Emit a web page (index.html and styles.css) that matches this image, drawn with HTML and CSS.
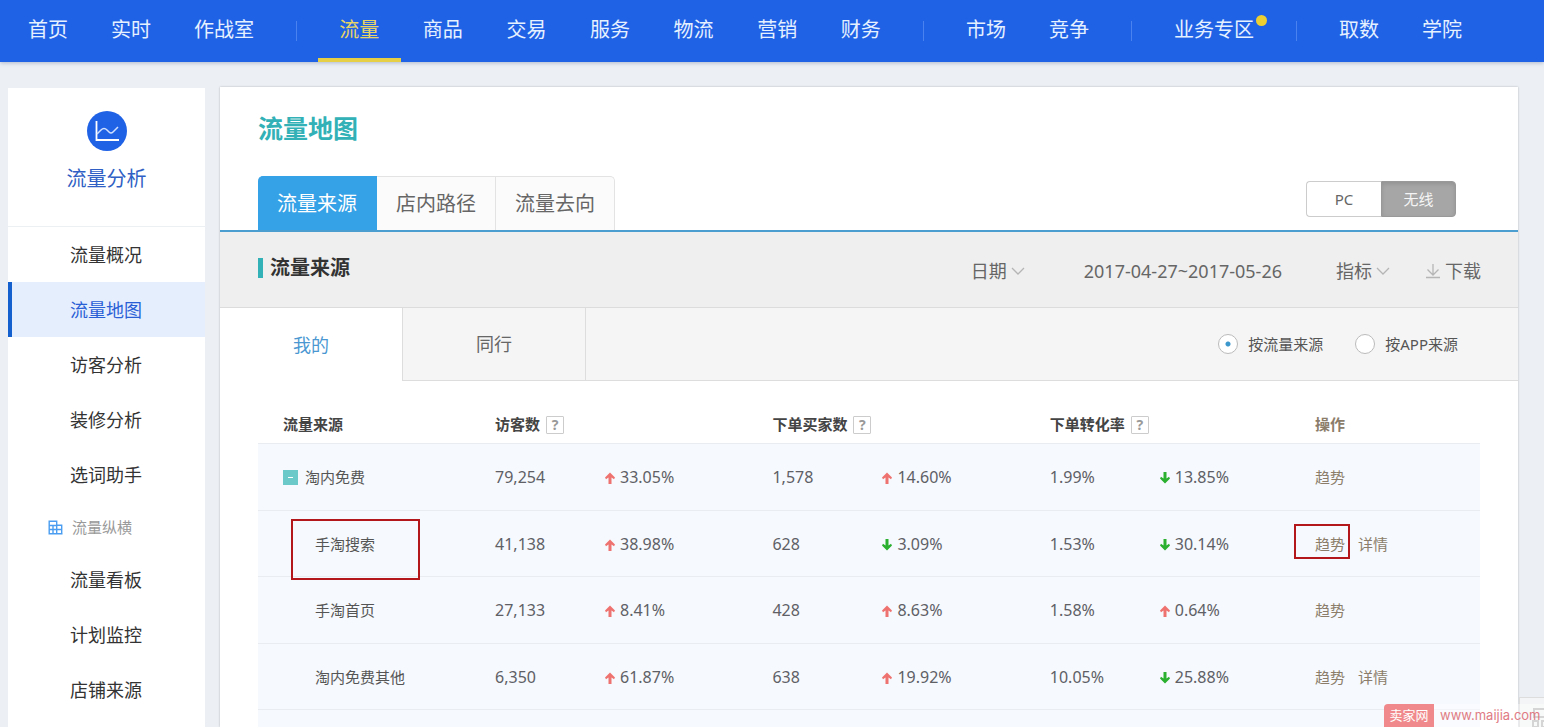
FILE: index.html
```html
<!DOCTYPE html>
<html lang="zh-CN">
<head>
<meta charset="utf-8">
<title>流量地图</title>
<link rel="stylesheet" href="styles.css">
</head>
<body>
<svg class="defs" aria-hidden="true">
  <symbol id="up" viewBox="0 0 10 12"><path d="M5 0.500 10 5.500 9 7.300 6.500 5.500V12h-3V5.500L1 7.300 0 5.500z"/></symbol>
  <symbol id="down" viewBox="0 0 10 12"><path d="M5 11.500 0 6.500 1 4.700 3.500 6.500V0h3v6.500L9 4.700l1 1.800z"/></symbol>
  <symbol id="chevron" viewBox="0 0 14 9"><path d="M1 1l6 6 6-6" fill="none" stroke="currentColor" stroke-width="1.300"/></symbol>
</svg>

<nav class="topbar">
  <div class="nav-group">
    <a href="#">首页</a><a href="#">实时</a><a href="#">作战室</a>
  </div>
  <span class="sep"></span>
  <div class="nav-group nav-wide">
    <a href="#" class="current">流量</a><a href="#">商品</a><a href="#">交易</a><a href="#">服务</a><a href="#">物流</a><a href="#">营销</a><a href="#">财务</a>
  </div>
  <span class="sep"></span>
  <div class="nav-group"><a href="#">市场</a><a href="#">竞争</a></div>
  <span class="sep"></span>
  <div class="nav-group"><a href="#"><span class="dotted">业务专区</span></a></div>
  <span class="sep"></span>
  <div class="nav-group"><a href="#">取数</a><a href="#">学院</a></div>
</nav>

<div class="layout">
  <aside class="sidebar">
    <div class="side-head">
      <svg width="40" height="40" viewBox="0 0 40 40" aria-hidden="true">
        <circle cx="20" cy="20" r="20" fill="#2062e6"/>
        <path d="M9.500 10v19H32" fill="none" stroke="#fff" stroke-width="1.800"/>
        <path d="M10 23l4-4q3-3 6 0l2 2q2 2 4 0l5-5" fill="none" stroke="#cfe0ff" stroke-width="1.500"/>
      </svg>
      <span>流量分析</span>
    </div>
    <a href="#">流量概况</a>
    <a href="#" class="current">流量地图</a>
    <a href="#">访客分析</a>
    <a href="#">装修分析</a>
    <a href="#">选词助手</a>
    <div class="side-group">
      <svg width="15" height="15" viewBox="0 0 15 15" fill="none" stroke="#4a9df0" stroke-width="1.400" aria-hidden="true">
        <path d="M1.200 13.800v-12.500h7.500v12.500M8.700 5.200h5v8.600M0.500 13.800h14M1.200 5.500h7.500M1.200 9.500h7.500M5 5v9M9 9.500h4.500"/>
      </svg>
      <span>流量纵横</span>
    </div>
    <a href="#">流量看板</a>
    <a href="#">计划监控</a>
    <a href="#">店铺来源</a>
  </aside>

  <main class="panel">
    <h1>流量地图</h1>
    <div class="tab-row">
      <div class="tabs">
        <button class="active">流量来源</button><button>店内路径</button><button>流量去向</button>
      </div>
      <div class="toggle">
        <button aria-pressed="false">PC</button><button aria-pressed="true">无线</button>
      </div>
    </div>

    <div class="section-head">
      <h2>流量来源</h2>
      <div class="tools">
        <button>日期<svg width="14" height="9"><use href="#chevron"/></svg></button>
        <span class="range">2017-04-27~2017-05-26</span>
        <button>指标<svg width="14" height="9"><use href="#chevron"/></svg></button>
        <button class="download"><svg width="16" height="16" viewBox="0 0 16 16" fill="none" stroke="currentColor" stroke-width="1.300"><path d="M8 1v10.500M2.500 6.500L8 12l5.500-5.500M1 14.500h14"/></svg>下载</button>
      </div>
    </div>

    <div class="scope">
      <button class="active">我的</button><button>同行</button>
      <div class="radios">
        <label><input type="radio" name="by" checked>按流量来源</label>
        <label><input type="radio" name="by">按APP来源</label>
      </div>
    </div>

    <div class="table-wrap">
      <table>
        <colgroup><col class="c-name"><col class="c-num"><col class="c-chg"><col class="c-num"><col class="c-chg"><col class="c-num"><col class="c-last"><col></colgroup>
        <thead>
          <tr>
            <th>流量来源</th>
            <th colspan="2">访客数<button class="help">?</button></th>
            <th colspan="2">下单买家数<button class="help">?</button></th>
            <th colspan="2">下单转化率<button class="help">?</button></th>
            <th class="ops">操作</th>
          </tr>
        </thead>
        <tbody>
          <tr>
            <td><button class="fold" aria-label="收起"></button>淘内免费</td>
            <td>79,254</td><td><svg class="up"><use href="#up"/></svg>33.05%</td>
            <td>1,578</td><td><svg class="up"><use href="#up"/></svg>14.60%</td>
            <td>1.99%</td><td><svg class="down"><use href="#down"/></svg>13.85%</td>
            <td class="ops"><a href="#">趋势</a></td>
          </tr>
          <tr class="sub">
            <td><span class="mark mark-name">手淘搜索</span></td>
            <td>41,138</td><td><svg class="up"><use href="#up"/></svg>38.98%</td>
            <td>628</td><td><svg class="down"><use href="#down"/></svg>3.09%</td>
            <td>1.53%</td><td><svg class="down"><use href="#down"/></svg>30.14%</td>
            <td class="ops"><a href="#" class="mark mark-link">趋势</a><a href="#">详情</a></td>
          </tr>
          <tr class="sub">
            <td>手淘首页</td>
            <td>27,133</td><td><svg class="up"><use href="#up"/></svg>8.41%</td>
            <td>428</td><td><svg class="up"><use href="#up"/></svg>8.63%</td>
            <td>1.58%</td><td><svg class="up"><use href="#up"/></svg>0.64%</td>
            <td class="ops"><a href="#">趋势</a></td>
          </tr>
          <tr class="sub">
            <td>淘内免费其他</td>
            <td>6,350</td><td><svg class="up"><use href="#up"/></svg>61.87%</td>
            <td>638</td><td><svg class="up"><use href="#up"/></svg>19.92%</td>
            <td>10.05%</td><td><svg class="down"><use href="#down"/></svg>25.88%</td>
            <td class="ops"><a href="#">趋势</a><a href="#">详情</a></td>
          </tr>
        </tbody>
      </table>
    </div>
  </main>
</div>

<div class="dock">
  <svg width="12" height="19" viewBox="0 0 12 19" fill="none" stroke="#b9b9b9" stroke-width="2" aria-hidden="true"><path d="M2 1h12v8H2zM1 13h5v6H1zM10 13h5v6h-5z"/></svg>
</div>
<div class="watermark"><b>卖家网</b><span>www.maijia.com</span></div>
</body>
</html>
```
FILE: styles.css
```css
* { box-sizing: border-box; }

body {
  margin: 0;
  height: 100vh;
  overflow: hidden;
  display: flex;
  flex-direction: column;
  background: #ecf0f5;
  color: #333;
  font-family: "Noto Sans", "Noto Sans CJK SC", sans-serif;
  font-size: 16px;
  line-height: 24px;
}

a { color: inherit; text-decoration: none; }
button {
  margin: 0;
  padding: 0;
  border: 0;
  background: none;
  color: inherit;
  font: inherit;
}
.defs { position: absolute; width: 0; height: 0; }

/* top navigation */
.topbar {
  flex: none;
  display: flex;
  align-items: center;
  height: 62px;
  padding-left: 7px;
  background: #2062e6;
  color: #e6f1ff;
  font-size: 20px;
  white-space: nowrap;
  box-shadow: 0 1px 4px rgba(60, 80, 130, .35);
  z-index: 1;
}
.nav-group { display: flex; }
.nav-group a {
  height: 62px;
  padding: 0 21px;
  line-height: 60px;
  text-align: center;
}
.nav-group a + a { margin-left: 1px; }
.nav-wide { flex: 0 0 584px; }
.nav-wide a { flex: 1; padding: 0; }
.nav-group .current { color: #e8d568; border-bottom: 4px solid #e6cf45; }
.sep { width: 1px; height: 20px; margin: 0 21px; background: #4a83f0; }
.dotted { position: relative; }
.dotted::after {
  content: "";
  position: absolute;
  top: -1px;
  right: -13px;
  width: 11px;
  height: 11px;
  border-radius: 50%;
  background: #edcf32;
}

.layout {
  flex: 1;
  min-height: 0;
  display: flex;
  gap: 15px;
  padding: 25px 26px 0 8px;
}

/* sidebar */
.sidebar {
  flex: 0 0 197px;
  margin-top: 1px;
  background: #fff;
  font-size: 18px;
}
.sidebar a {
  display: block;
  height: 55px;
  padding: 2px 0 0 62px;
  line-height: 53px;
}
.sidebar a.current {
  padding-left: 58px;
  border-left: 4px solid #1560cf;
  background: #e5eefd;
  color: #2a60d6;
}
.side-head {
  display: flex;
  flex-direction: column;
  align-items: center;
  gap: 16px;
  height: 139px;
  padding-top: 23px;
  border-bottom: 1px solid #edf0f2;
  color: #2f5fc4;
  font-size: 20px;
}
.side-group {
  display: flex;
  align-items: center;
  gap: 9px;
  height: 50px;
  padding-left: 40px;
  color: #999;
  font-size: 15px;
}

/* main panel */
.panel {
  flex: 1;
  display: flex;
  flex-direction: column;
  min-width: 0;
  background: #fff;
  box-shadow: 0 0 2px rgba(0, 0, 0, .25);
}
h1 {
  margin: 0;
  padding: 25px 38px 0;
  color: #32b1b6;
  font-size: 25px;
  line-height: 32px;
}
.tab-row {
  display: flex;
  justify-content: space-between;
  align-items: flex-end;
  margin-top: 32px;
  padding: 0 62px 0 38px;
  border-bottom: 2px solid #4a9fd0;
}
.tabs { display: flex; }
.tabs button {
  width: 119px;
  height: 54px;
  border: 1px solid #e3e3e3;
  border-width: 1px 1px 0 0;
  background: #fbfbfb;
  color: #666;
  font-size: 20px;
}
.tabs button:first-child { border-top-left-radius: 5px; }
.tabs button:last-child { border-top-right-radius: 5px; }
.tabs .active { border-color: #35a1e6; background: #35a1e6; color: #fff; }
.toggle { display: flex; margin-bottom: 13px; }
.toggle button {
  width: 75px;
  height: 36px;
  border: 1px solid #ccc;
  border-right: 0;
  border-radius: 4px 0 0 4px;
  color: #666;
  font-size: 15px;
}
.toggle [aria-pressed="true"] {
  border: 1px solid #999;
  border-radius: 0 4px 4px 0;
  background: #a6a6a6;
  color: #f5f5f5;
  box-shadow: inset 0 2px 4px rgba(0, 0, 0, .12);
}

.section-head {
  display: flex;
  justify-content: space-between;
  align-items: center;
  height: 76px;
  padding: 0 37px 0 38px;
  border-bottom: 1px solid #dcdcdc;
  background: #efefef;
}
h2 {
  margin: 0 0 4px;
  padding-left: 7px;
  border-left: 5px solid #32b1b6;
  font-size: 20px;
  line-height: 20px;
}
.tools {
  display: flex;
  align-items: center;
  color: #666;
  font-size: 18px;
  margin-top: 3px;
}
.tools button { display: flex; align-items: center; gap: 4px; }
.tools svg { color: #b5b5b5; }
.range { margin: 0 54px 0 59px; }
.tools .download { margin-left: 35px; }

.scope {
  display: flex;
  height: 73px;
  border-bottom: 1px solid #ddd;
  background: #f5f5f5;
  font-size: 18px;
}
.scope > button {
  width: 183px;
  border-right: 1px solid #ddd;
  color: #666;
}
.scope .active { margin-bottom: -1px; background: #fff; color: #4a97d2; }
.radios {
  display: flex;
  align-items: center;
  gap: 32px;
  margin-left: auto;
  padding-right: 60px;
  color: #555;
  font-size: 15px;
}
.radios label { display: flex; align-items: center; gap: 10px; }
.radios input {
  appearance: none;
  width: 20px;
  height: 20px;
  margin: 0;
  border: 1px solid #bbb;
  border-radius: 50%;
  background: #fff;
}
.radios input:checked { background: radial-gradient(circle, #3b97cc 0 2px, #fff 3px); }

/* table */
.table-wrap {
  flex: 1;
  margin: 24px 38px 0;
  background: #f6f9fd;
}
table {
  width: 100%;
  table-layout: fixed;
  border-collapse: collapse;
  border-bottom: 1px solid #e9edf2;
}
.c-name { width: 19.4%; }
.c-num { width: 9%; }
.c-chg { width: 13.7%; }
.c-last { width: 12.7%; }
th, td { padding: 0; text-align: left; }
th {
  height: 38px;
  background: #fff;
  font-size: 15px;
  color: #444;
}
th:first-child, td:first-child { padding-left: 25px; }
td {
  height: 66px;
  padding-top: 1px;
  border-top: 1px solid #e9edf2;
  color: #5e6066;
}
tbody tr:nth-child(odd) td { height: 67px; }
td:first-child, td.ops { font-size: 15px; }
td:first-child { color: #555; }
.sub td:first-child { padding-left: 57px; }
.ops, td.ops { color: #8b7d6a; }
.ops a + a { margin-left: 13px; }
td svg { width: 10px; height: 12px; margin-right: 5px; vertical-align: -1px; }
.up { fill: #ee7370; }
.down { fill: #2bb02f; }
.help {
  width: 18px;
  height: 18px;
  margin-left: 6px;
  border: 1px solid #ccc;
  border-radius: 1px;
  color: #999;
  font-size: 14px;
  line-height: 16px;
}
.fold {
  width: 15px;
  height: 15px;
  margin-right: 7px;
  background: linear-gradient(#fff, #fff) center / 5px 1px no-repeat #6cc9c9;
  vertical-align: -2px;
}

/* highlight frames over the table */
.mark { position: relative; }
.mark::after {
  content: "";
  position: absolute;
  border: 2px solid #b3171c;
}
.mark-name::after { inset: -15px -45px -26px -24px; }
.mark-link::after { inset: -10px -5px -5px -21px; }

/* corner items */
.dock {
  position: absolute;
  right: 0;
  bottom: 0;
  width: 25px;
  height: 30px;
  padding: 10px 0 0 12px;
  overflow: hidden;
  border: 1px solid #ddd;
  border-width: 1px 0 0 1px;
  background: #f4f5f6;
}
.dock svg { display: block; }
.watermark {
  position: absolute;
  right: 0;
  bottom: 0;
  z-index: 2;
  display: flex;
  width: 160px;
  height: 23px;
  line-height: 23px;
  background: rgba(255, 255, 255, .4);
  color: #e07b84;
  font-family: Inter, "Noto Sans CJK SC", sans-serif;
  font-size: 13px;
}
.watermark b {
  width: 50px;
  border-radius: 4px 0 0 0;
  background: #f0898b;
  color: #fff;
  font-weight: 400;
  text-align: center;
}
.watermark span { padding-left: 6px; }
```
